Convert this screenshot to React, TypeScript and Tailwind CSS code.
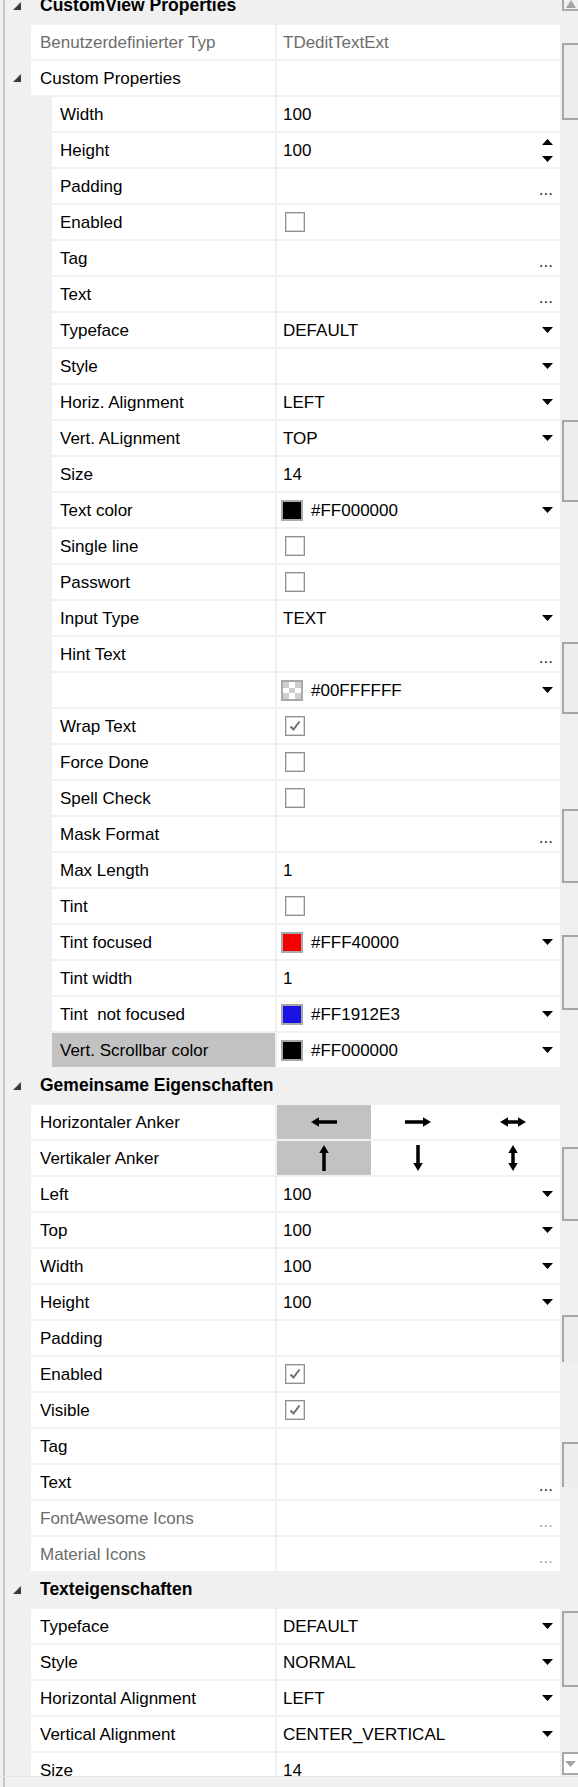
import React from "react";

type Value =
  | { kind: "none" }
  | { kind: "text"; text: string; muted?: boolean }
  | { kind: "drop"; text?: string }
  | { kind: "dots"; muted?: boolean }
  | { kind: "check"; checked: boolean }
  | { kind: "color"; color: string; text: string; checker?: boolean }
  | { kind: "spin"; text: string }
  | { kind: "anchor"; axis: "h" | "v" };

type Row =
  | { type: "header"; label: string }
  | { type: "prop"; label: string; level: 1 | 2; value: Value; muted?: boolean; selected?: boolean; expander?: boolean };

const none: Value = { kind: "none" };
const dots: Value = { kind: "dots" };
const drop = (text?: string): Value => ({ kind: "drop", text });
const text = (t: string): Value => ({ kind: "text", text: t });
const check = (checked: boolean): Value => ({ kind: "check", checked });
const color = (c: string, t: string, checker?: boolean): Value => ({ kind: "color", color: c, text: t, checker });

const custom = (label: string, value: Value, selected?: boolean): Row => ({ type: "prop", label, level: 2, value, selected });
const common = (label: string, value: Value, muted?: boolean): Row => ({ type: "prop", label, level: 1, value, muted });

const rows: Row[] = [
  { type: "header", label: "CustomView Properties" },
  { type: "prop", label: "Benutzerdefinierter Typ", level: 1, value: { kind: "text", text: "TDeditTextExt", muted: true }, muted: true },
  { type: "prop", label: "Custom Properties", level: 1, value: none, expander: true },
  custom("Width", text("100")),
  custom("Height", { kind: "spin", text: "100" }),
  custom("Padding", dots),
  custom("Enabled", check(false)),
  custom("Tag", dots),
  custom("Text", dots),
  custom("Typeface", drop("DEFAULT")),
  custom("Style", drop()),
  custom("Horiz. Alignment", drop("LEFT")),
  custom("Vert. ALignment", drop("TOP")),
  custom("Size", text("14")),
  custom("Text color", color("#000000", "#FF000000")),
  custom("Single line", check(false)),
  custom("Passwort", check(false)),
  custom("Input Type", drop("TEXT")),
  custom("Hint Text", dots),
  custom("", color("", "#00FFFFFF", true)),
  custom("Wrap Text", check(true)),
  custom("Force Done", check(false)),
  custom("Spell Check", check(false)),
  custom("Mask Format", dots),
  custom("Max Length", text("1")),
  custom("Tint", check(false)),
  custom("Tint focused", color("#f40000", "#FFF40000")),
  custom("Tint width", text("1")),
  custom("Tint  not focused", color("#1912e3", "#FF1912E3")),
  custom("Vert. Scrollbar color", color("#000000", "#FF000000"), true),
  { type: "header", label: "Gemeinsame Eigenschaften" },
  common("Horizontaler Anker", { kind: "anchor", axis: "h" }),
  common("Vertikaler Anker", { kind: "anchor", axis: "v" }),
  common("Left", drop("100")),
  common("Top", drop("100")),
  common("Width", drop("100")),
  common("Height", drop("100")),
  common("Padding", none),
  common("Enabled", check(true)),
  common("Visible", check(true)),
  common("Tag", none),
  common("Text", dots),
  common("FontAwesome Icons", { kind: "dots", muted: true }, true),
  common("Material Icons", { kind: "dots", muted: true }, true),
  { type: "header", label: "Texteigenschaften" },
  common("Typeface", drop("DEFAULT")),
  common("Style", drop("NORMAL")),
  common("Horizontal Alignment", drop("LEFT")),
  common("Vertical Alignment", drop("CENTER_VERTICAL")),
  common("Size", text("14")),
];

function Expander() {
  return (
    <svg width="10" height="10" viewBox="0 0 10 10" className="shrink-0">
      <polygon points="9,1 9,9 1,9" fill="#3c3c3c" />
    </svg>
  );
}

function DownArrow({ fill = "#000" }: { fill?: string }) {
  return (
    <svg width="11" height="6" viewBox="0 0 11 6">
      <polygon points="0,0 11,0 5.5,6" fill={fill} />
    </svg>
  );
}

function UpArrow({ fill = "#000" }: { fill?: string }) {
  return (
    <svg width="11" height="6" viewBox="0 0 11 6">
      <polygon points="0,6 11,6 5.5,0" fill={fill} />
    </svg>
  );
}

function CheckBox({ checked }: { checked: boolean }) {
  return (
    <div className="flex h-[20px] w-[20px] items-center justify-center border border-[#8f8f8f] bg-white shadow-[inset_0_0_0_1px_#d6d6d6]">
      {checked && (
        <svg width="14" height="14" viewBox="0 0 14 14">
          <path d="M2.5 7.5 L5.5 10.5 L11.5 2.5" fill="none" stroke="#6f6f6f" strokeWidth="2" />
        </svg>
      )}
    </div>
  );
}

function Swatch({ fill, checker }: { fill: string; checker?: boolean }) {
  return (
    <div className="h-[21px] w-[22px] shrink-0 border-2 border-[#a9a9a9] bg-white">
      {checker ? (
        <svg width="18" height="17" viewBox="0 0 18 17" className="block">
          <rect x="0" y="0" width="6" height="6" fill="#cfcfcf" />
          <rect x="12" y="0" width="6" height="6" fill="#cfcfcf" />
          <rect x="6" y="6" width="6" height="5" fill="#cfcfcf" />
          <rect x="0" y="11" width="6" height="6" fill="#cfcfcf" />
          <rect x="12" y="11" width="6" height="6" fill="#cfcfcf" />
        </svg>
      ) : (
        <div className="h-full w-full" style={{ backgroundColor: fill }} />
      )}
    </div>
  );
}

function AnchorArrow({ dir }: { dir: "left" | "right" | "both" | "up" | "down" | "updown" }) {
  const horizontal = dir === "left" || dir === "right" || dir === "both";
  const start = dir === "left" || dir === "both" || dir === "up" || dir === "updown";
  const end = dir === "right" || dir === "both" || dir === "down" || dir === "updown";
  const shaft = (
    <>
      <rect x={start ? 5 : 0} y="3" width={26 - (start ? 5 : 0) - (end ? 5 : 0)} height="3.5" fill="#000" />
      {start && <polygon points="0,4.75 8,0 8,9.5" fill="#000" />}
      {end && <polygon points="26,4.75 18,0 18,9.5" fill="#000" />}
    </>
  );
  if (horizontal) {
    return (
      <svg width="26" height="10" viewBox="0 0 26 9.5">
        {shaft}
      </svg>
    );
  }
  return (
    <svg width="10" height="26" viewBox="0 0 9.5 26">
      <g transform="translate(9.5 0) rotate(90)">{shaft}</g>
    </svg>
  );
}

function ValueCell({ value }: { value: Value }) {
  switch (value.kind) {
    case "none":
      return <div className="h-full w-[283px] bg-white" />;
    case "text":
      return (
        <div className={`flex h-full w-[283px] items-center bg-white pl-[6px] ${value.muted ? "text-[#6d6d6d]" : "text-black"}`}>
          {value.text}
        </div>
      );
    case "drop":
      return (
        <div className="flex h-full w-[283px] items-center justify-between bg-white pl-[6px] pr-[7px]">
          <span>{value.text ?? ""}</span>
          <DownArrow />
        </div>
      );
    case "spin":
      return (
        <div className="flex h-full w-[283px] items-center justify-between bg-white pl-[6px] pr-[7px]">
          <span>{value.text}</span>
          <div className="flex flex-col gap-[11px]">
            <UpArrow />
            <DownArrow />
          </div>
        </div>
      );
    case "dots":
      return (
        <div className="flex h-full w-[283px] items-end justify-end bg-white pb-[5px] pr-[7px]">
          <span className={`text-[17px] leading-none ${value.muted ? "text-[#a7a7a7]" : "text-[#1c2f57]"}`}>...</span>
        </div>
      );
    case "check":
      return (
        <div className="flex h-full w-[283px] items-center bg-white pl-[8px]">
          <CheckBox checked={value.checked} />
        </div>
      );
    case "color":
      return (
        <div className="flex h-full w-[283px] items-center bg-white pl-[4px] pr-[7px]">
          <Swatch fill={value.color} checker={value.checker} />
          <span className="ml-[8px] flex-1">{value.text}</span>
          <DownArrow />
        </div>
      );
    case "anchor": {
      const items: ("left" | "right" | "both" | "up" | "down" | "updown")[] =
        value.axis === "h" ? ["left", "right", "both"] : ["up", "down", "updown"];
      return (
        <div className="grid h-full w-[283px] grid-cols-3 bg-white">
          {items.map((d, i) => (
            <div key={d} className={`flex items-center justify-center ${i === 0 ? "bg-[#c2c2c2]" : ""}`}>
              <AnchorArrow dir={d} />
            </div>
          ))}
        </div>
      );
    }
  }
}

function PropertyRow({ row }: { row: Row }) {
  if (row.type === "header") {
    return (
      <div className="flex h-[34px] shrink-0 items-center">
        <div className="flex w-[35px] justify-start pl-[7px]">
          <Expander />
        </div>
        <span className="text-[17.5px] font-bold text-black">{row.label}</span>
      </div>
    );
  }
  return (
    <div className="flex h-[34px] shrink-0 items-stretch">
      <div className={`flex items-center justify-start ${row.level === 1 ? "w-[26px]" : "w-[47px]"} pl-[7px]`}>
        {row.expander && <Expander />}
      </div>
      <div className="flex flex-1 gap-[2px]">
        <div
          className={`flex flex-1 items-center whitespace-pre ${row.level === 1 ? "pl-[9px]" : "pl-[8px]"} ${
            row.selected ? "bg-[#c2c2c2]" : "bg-white"
          } ${row.muted ? "text-[#6d6d6d]" : "text-black"}`}
        >
          {row.label}
        </div>
        <ValueCell value={row.value} />
      </div>
    </div>
  );
}

// thumb fragments left behind in the vertical scrollbar track
const thumbs = [
  "top-[43px] h-[77px] border-b-2",
  "top-[420px] h-[82px] border-b-2",
  "top-[642px] h-[72px] border-b-2",
  "top-[809px] h-[74px] border-b-2",
  "top-[935px] h-[75px] border-b-2",
  "top-[1147px] h-[74px] border-b-2",
  "top-[1315px] h-[47px]",
  "top-[1442px] h-[45px]",
  "top-[1611px] h-[76px] border-b-2",
];

function ScrollTrack() {
  return (
    <div className="relative h-full w-[16px] overflow-hidden">
      <div className="absolute left-0 top-0 flex h-[11px] w-[22px] items-end justify-center border-b-2 border-l-2 border-[#a8a8a8] pr-[6px]">
        <svg width="10" height="8" viewBox="0 0 10 8" className="mb-[1px]">
          <polygon points="0,8 10,8 5,0" fill="#a5a5a5" />
        </svg>
      </div>
      {thumbs.map((t) => (
        <div key={t} className={`absolute left-0 w-[22px] border-l-2 border-t-2 border-[#a6a6a6] bg-[#ededed] ${t}`} />
      ))}
      <div className="absolute left-0 top-[1752px] flex h-[23px] w-[22px] items-center justify-center border-2 border-[#a8a8a8] bg-white pr-[6px]">
        <DownArrow fill="#a5a5a5" />
      </div>
    </div>
  );
}

export default function App() {
  return (
    <div className="flex h-[1787px] w-[578px] flex-col overflow-hidden bg-[#f0f0f0] font-['Liberation_Sans',Arial,sans-serif] text-[17px] leading-none">
      <div className="flex h-[1776px] shrink-0">
        <div className="w-[3px] shrink-0" />
        <div className="w-[2px] shrink-0 bg-[#c6c6c6]" />
        <div className="w-[555px] shrink-0 overflow-hidden">
          <div className="-mt-[11px] flex flex-col gap-[2px]">
            {rows.map((row, i) => (
              <PropertyRow key={i} row={row} />
            ))}
          </div>
        </div>
        <div className="w-[2px] shrink-0" />
        <ScrollTrack />
      </div>
      <div className="flex h-[11px] shrink-0 border-t border-[#e2e2e2]">
        <div className="w-[3px] shrink-0" />
        <div className="w-[2px] shrink-0 bg-[#c6c6c6]" />
      </div>
    </div>
  );
}
